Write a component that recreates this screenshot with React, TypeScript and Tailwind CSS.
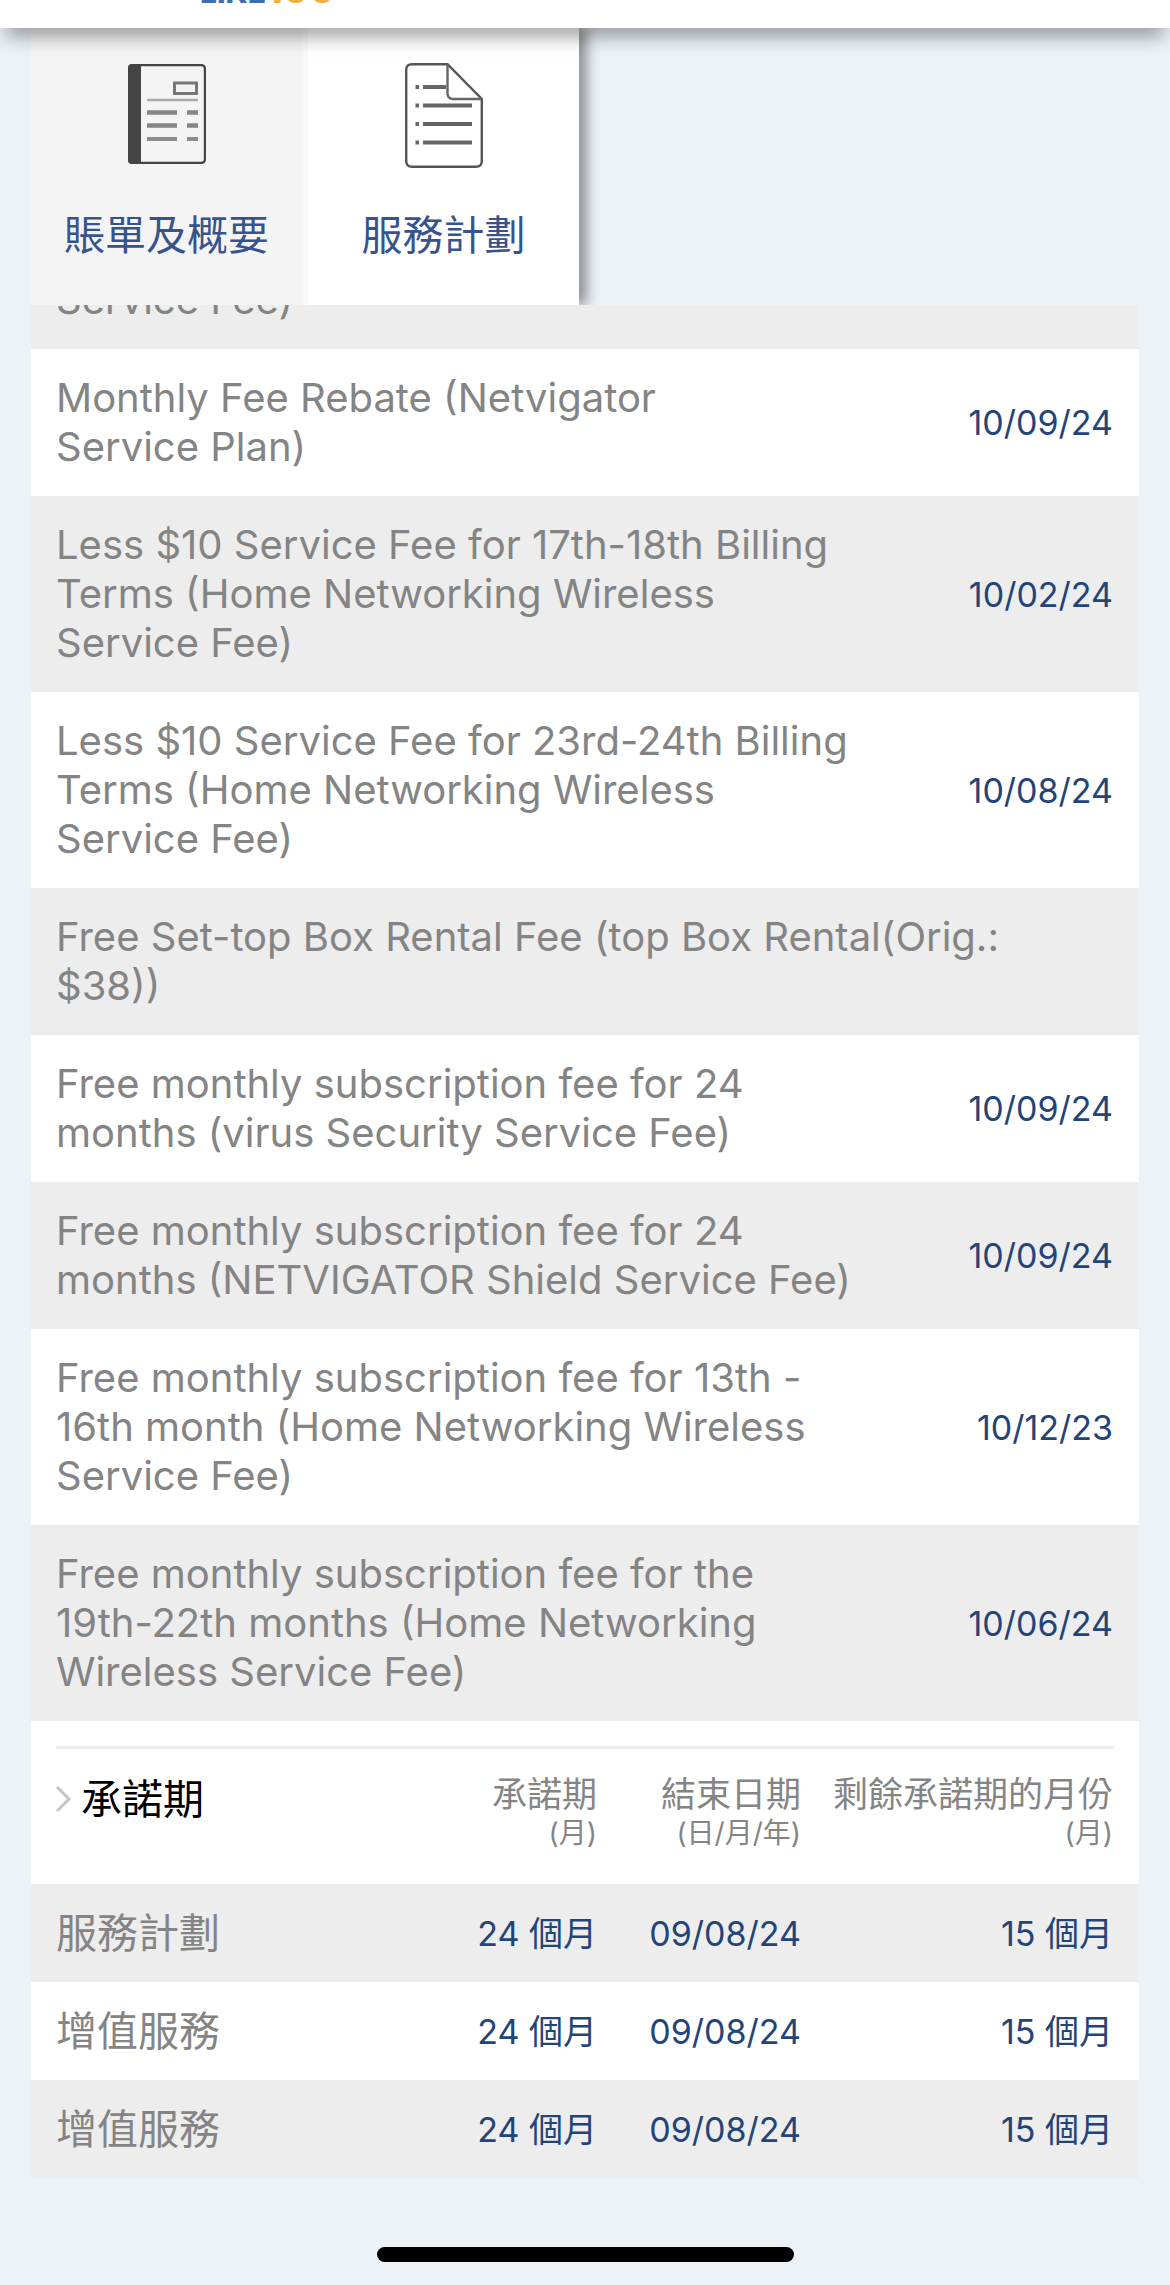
interface Offer {
  lines: string[];
  date?: string;
}

interface Commitment {
  name: string;
  term: string;
  endDate: string;
  remaining: string;
}

const offers: Offer[] = [
  { lines: ["Service Fee)"] },
  { lines: ["Monthly Fee Rebate (Netvigator", "Service Plan)"], date: "10/09/24" },
  {
    lines: [
      "Less $10 Service Fee for 17th-18th Billing",
      "Terms (Home Networking Wireless",
      "Service Fee)",
    ],
    date: "10/02/24",
  },
  {
    lines: [
      "Less $10 Service Fee for 23rd-24th Billing",
      "Terms (Home Networking Wireless",
      "Service Fee)",
    ],
    date: "10/08/24",
  },
  { lines: ["Free Set-top Box Rental Fee (top Box Rental(Orig.:", "$38))"] },
  {
    lines: ["Free monthly subscription fee for 24", "months (virus Security Service Fee)"],
    date: "10/09/24",
  },
  {
    lines: ["Free monthly subscription fee for 24", "months (NETVIGATOR Shield Service Fee)"],
    date: "10/09/24",
  },
  {
    lines: [
      "Free monthly subscription fee for 13th -",
      "16th month (Home Networking Wireless",
      "Service Fee)",
    ],
    date: "10/12/23",
  },
  {
    lines: [
      "Free monthly subscription fee for the",
      "19th-22th months (Home Networking",
      "Wireless Service Fee)",
    ],
    date: "10/06/24",
  },
];

const commitments: Commitment[] = [
  { name: "服務計劃", term: "24 個月", endDate: "09/08/24", remaining: "15 個月" },
  { name: "增值服務", term: "24 個月", endDate: "09/08/24", remaining: "15 個月" },
  { name: "增值服務", term: "24 個月", endDate: "09/08/24", remaining: "15 個月" },
];

function BillIcon() {
  return (
    <svg width="78" height="100" viewBox="0 0 78 100" fill="none" aria-hidden="true">
      <rect x="1" y="1" width="76" height="98" rx="4" stroke="#444" strokeWidth="2.4" />
      <path d="M4 0H13V100H4Q0 100 0 96V4Q0 0 4 0Z" fill="#444" />
      <rect x="46.5" y="19" width="22" height="10.5" stroke="#777" strokeWidth="3" />
      <path d="M19 36H70" stroke="#aaa" strokeWidth="2.5" />
      <path d="M19 48.5H49M59 48.5H70M19 61.5H49M59 61.5H70" stroke="#858585" strokeWidth="4.5" />
      <path d="M19 75H49M59 75H70" stroke="#8c8c8c" strokeWidth="4" />
    </svg>
  );
}

function PlanIcon() {
  return (
    <svg width="78" height="105" viewBox="0 0 78 105" fill="none" aria-hidden="true">
      <path
        d="M42.5 1.2H7Q1.2 1.2 1.2 7V98Q1.2 103.8 7 103.8H71Q76.8 103.8 76.8 98V36Z"
        stroke="#555"
        strokeWidth="2.4"
      />
      <path d="M42.5 1.2V30Q42.5 36 48 36H76.8" stroke="#666" strokeWidth="2.4" />
      <path
        d="M10.5 24H14M18 24H41M10.5 42.5H14M18 42.5H67M10.5 61H14M18 61H67M10.5 79.5H14M18 79.5H67"
        stroke="#666"
        strokeWidth="4"
      />
    </svg>
  );
}

function ChevronIcon() {
  return (
    <svg width="16" height="28" viewBox="0 0 16 28" fill="none" aria-hidden="true">
      <path d="M1 2L13 14L1 26" stroke="#c4c4c8" strokeWidth="3" />
    </svg>
  );
}

export default function App() {
  return (
    <div className="min-h-screen bg-[#edf2f7] font-['Inter','Noto_Sans_CJK_TC',sans-serif]">
      <header className="relative z-20 flex h-7 bg-white pl-[200px] shadow-[0_12px_20px_-6px_rgba(0,0,0,0.5)]">
        <div className="h-7 overflow-hidden">
          <p className="-mt-[31px] text-[30px] leading-10 font-extrabold text-[#3c6eb0]">
            LIKE<span className="text-[38px] text-[#eeb040]">100</span>
          </p>
        </div>
      </header>

      <main className="px-[31px]">
        <nav className="relative z-10 flex overflow-hidden bg-[#edf2f7]">
          <div className="flex gap-[6px] bg-[#f9f9f9] shadow-[8px_0_12px_rgba(0,0,0,0.4)]">
            <button className="flex h-[277px] w-[271px] flex-col items-center bg-[#f4f4f4] pt-9">
              <span className="h-[141px]">
                <BillIcon />
              </span>
              <span className="text-[41px] leading-[60px] text-[#37538c]">賬單及概要</span>
            </button>
            <button className="flex h-[277px] w-[271px] flex-col items-center bg-white pt-[35px]">
              <span className="h-[142px]">
                <PlanIcon />
              </span>
              <span className="text-[41px] leading-[60px] text-[#37538c]">服務計劃</span>
            </button>
          </div>
        </nav>

        <table className="-mt-[54px] w-full">
          <tbody>
            {offers.map((offer, index) => (
              <tr key={index} className="odd:bg-[#ededed] even:bg-white">
                <td
                  colSpan={offer.date ? 1 : 2}
                  className="pt-6 pb-[25px] pl-[25px] text-[40px] leading-[49px] whitespace-nowrap text-[#848484]"
                >
                  {offer.lines.map((line) => (
                    <span key={line} className="block">
                      {line}
                    </span>
                  ))}
                </td>
                {offer.date && (
                  <td className="pr-[26px] text-right text-[34px] text-[#234478]">{offer.date}</td>
                )}
              </tr>
            ))}
          </tbody>
        </table>

        <section className="bg-white pt-[25px]">
          <hr className="mx-[25px] border-t-[3px] border-[#ededed]" />
          <table className="w-full">
            <thead>
              <tr className="h-[135px] align-top text-[#848484]">
                <th className="pt-[26px] pl-[25px] text-left font-normal">
                  <button className="flex items-center gap-[9px] text-[41px] leading-[48px] text-black">
                    <ChevronIcon />
                    承諾期
                  </button>
                </th>
                <th className="w-[200px] pt-[22px] text-right text-[35px] leading-[46px] font-normal">
                  承諾期
                  <span className="block text-[28px] leading-8">(月)</span>
                </th>
                <th className="w-[204px] pt-[22px] text-right text-[35px] leading-[46px] font-normal">
                  結束日期
                  <span className="block text-[28px] leading-8">(日/月/年)</span>
                </th>
                <th className="w-[338px] pt-[22px] pr-[26px] text-right text-[35px] leading-[46px] font-normal">
                  剩餘承諾期的月份
                  <span className="block text-[28px] leading-8">(月)</span>
                </th>
              </tr>
            </thead>
            <tbody>
              {commitments.map((item, index) => (
                <tr key={index} className="h-[98px] text-right text-[34px] text-[#234478] odd:bg-[#ededed]">
                  <td className="pl-[25px] text-left text-[41px] leading-[60px] text-[#848484]">{item.name}</td>
                  <td>{item.term}</td>
                  <td>{item.endDate}</td>
                  <td className="pr-[26px]">{item.remaining}</td>
                </tr>
              ))}
            </tbody>
          </table>
        </section>
      </main>

      <footer className="flex justify-center pt-[69px] pb-[22px]">
        <div className="h-[15px] w-[417px] rounded-full bg-black" />
      </footer>
    </div>
  );
}
